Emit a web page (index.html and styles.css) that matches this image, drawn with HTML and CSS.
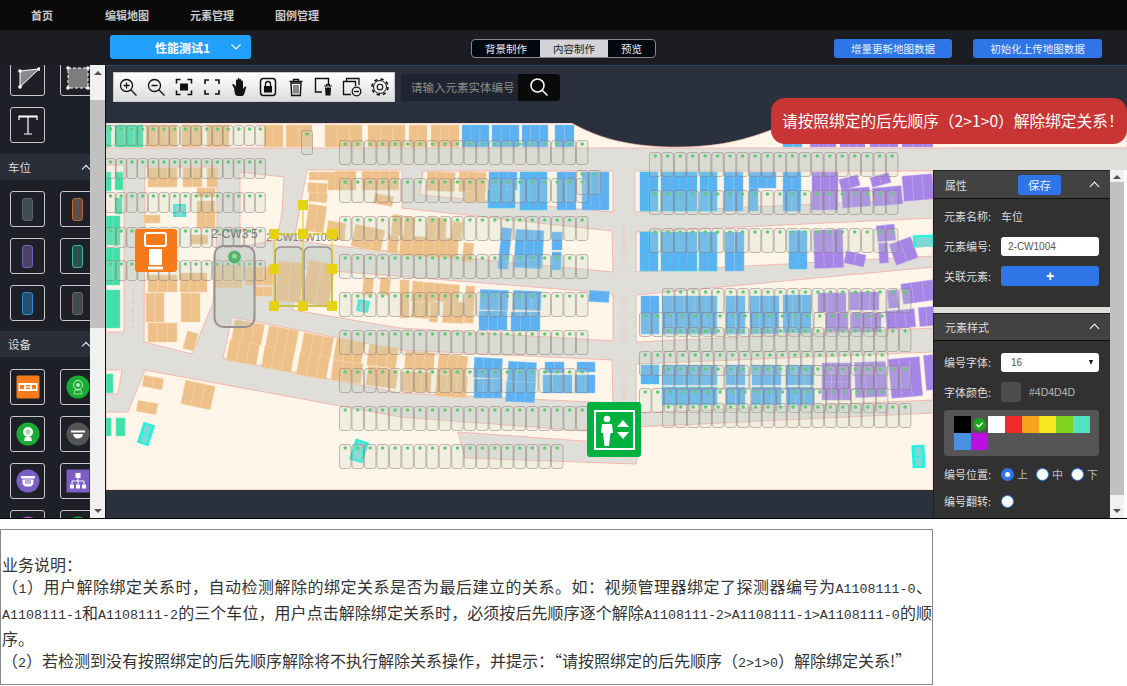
FILE: index.html
```html
<!doctype html>
<html>
    <head>
        <meta charset="utf-8">
        <title>编辑地图</title>
        <link rel="stylesheet" href="styles.css">
        <script src="map.js"></script>
    </head>
    <body>
        <div class="app">
            <nav class="topnav">
                <a class="nav-item">首页</a>
                <a class="nav-item">编辑地图</a>
                <a class="nav-item">元素管理</a>
                <a class="nav-item">图例管理</a>
            </nav>

            <div class="subbar">
                <div class="map-select">
                    <span>性能测试1</span>
                    <svg class="map-select-arrow" width="12" height="8" viewBox="0 0 12 8"><path d="M1.500 1.500 6 6l4.500-4.500" fill="none" stroke="#fff" stroke-width="1.200"/></svg>
                </div>
                <div class="tabs">
                    <span class="tab tab-1">背景制作</span>
                    <span class="tab tab-1 active">内容制作</span>
                    <span class="tab tab-2">预览</span>
                </div>
                <button class="blue-btn btn-a">增量更新地图数据</button>
                <button class="blue-btn btn-b">初始化上传地图数据</button>
            </div>

            <div class="main">
                <aside class="sidebar">
                    <div class="tile-row first">
                        <div class="tile">
                            <svg width="24" height="24" viewBox="0 0 24 24"><path d="M4 5 23 3 4 21Z" fill="#8a8a8a" stroke="#fff"/><g fill="#fff"><circle cx="4" cy="5" r="1.800"/><circle cx="23" cy="3" r="1.800"/><circle cx="4" cy="21" r="1.800"/></g></svg>
                        </div>
                        <div class="tile">
                            <svg width="28" height="28" viewBox="0 0 28 28"><rect x="4" y="4" width="20" height="20" fill="#7d7d7d" stroke="#fff" stroke-dasharray="3 2"/><g fill="#fff"><circle cx="4" cy="4" r="1.800"/><circle cx="24" cy="4" r="1.800"/><circle cx="4" cy="24" r="1.800"/><circle cx="24" cy="24" r="1.800"/></g></svg>
                        </div>
                    </div>
                    <div class="tile-row">
                        <div class="tile">
                            <svg width="24" height="24" viewBox="0 0 24 24"><path d="M3 7V3h18v4M3 3.800h18M12 3.500V21M8 21h8" fill="none" stroke="#fff" stroke-width="1.200"/></svg>
                        </div>
                    </div>

                    <div class="section-head"><span>车位</span><i class="chev"></i></div>
                    <div class="tile-row">
                        <div class="tile"><i class="slot slot-grey"></i></div>
                        <div class="tile"><i class="slot slot-orange"></i></div>
                    </div>
                    <div class="tile-row">
                        <div class="tile"><i class="slot slot-purple"></i></div>
                        <div class="tile"><i class="slot slot-teal"></i></div>
                    </div>
                    <div class="tile-row">
                        <div class="tile"><i class="slot slot-blue"></i></div>
                        <div class="tile"><i class="slot slot-red"></i></div>
                    </div>

                    <div class="section-head second"><span>设备</span><i class="chev"></i></div>
                    <div class="tile-row">
                        <div class="tile">
                            <svg width="24" height="24" viewBox="0 0 24 24"><rect width="23" height="23" x=".5" y=".5" rx="1.500" fill="#f57a1a"/><rect x="2.500" y="8" width="19" height="8" fill="#fff"/><g fill="#f57a1a"><rect x="4" y="10" width="4" height="4"/><rect x="10" y="10" width="4" height="1.500"/><rect x="10" y="12.600" width="4" height="1.500"/><rect x="16" y="10" width="4" height="4"/></g></svg>
                        </div>
                        <div class="tile">
                            <svg width="24" height="24" viewBox="0 0 24 24"><circle cx="12" cy="12" r="11.500" fill="#19ad36"/><circle cx="12" cy="10" r="4.500" fill="none" stroke="#d8f0dc" stroke-width="1"/><circle cx="12" cy="10" r="2" fill="#b5e4be"/><path d="M8 19h8l-1-4H9Z" fill="none" stroke="#d8f0dc" stroke-width=".7"/></svg>
                        </div>
                    </div>
                    <div class="tile-row">
                        <div class="tile">
                            <svg width="24" height="24" viewBox="0 0 24 24"><circle cx="12" cy="12" r="11.500" fill="#19ad36"/><circle cx="12" cy="10" r="5" fill="#fff"/><circle cx="12" cy="10" r="2.400" fill="#9fd8aa"/><path d="M8 19h8l-1-4H9Z" fill="#fff"/></svg>
                        </div>
                        <div class="tile">
                            <svg width="24" height="24" viewBox="0 0 24 24"><circle cx="12" cy="12" r="11.500" fill="#555"/><rect x="5" y="8.500" width="14" height="2" fill="#fff"/><path d="M7 12h10c-.5 3-2.500 4.500-5 4.500S7.500 15 7 12Z" fill="#fff"/></svg>
                        </div>
                    </div>
                    <div class="tile-row">
                        <div class="tile">
                            <svg width="24" height="24" viewBox="0 0 24 24"><circle cx="12" cy="12" r="11.500" fill="#7b5fc4"/><rect x="5" y="7" width="14" height="2.500" fill="#fff"/><path d="M6.500 10.500h11V15l-2.500 2.500H9L6.500 15Z" fill="#fff"/><path d="M10 11v4M12 11v4M14 11v4" stroke="#7b5fc4"/></svg>
                        </div>
                        <div class="tile">
                            <svg width="24" height="24" viewBox="0 0 24 24"><rect width="23" height="23" x=".5" y=".5" fill="#7b5fc4"/><g fill="#fff"><rect x="9.500" y="4" width="5" height="5"/><rect x="4" y="15.500" width="4" height="4"/><rect x="10" y="15.500" width="4" height="4"/><rect x="16" y="15.500" width="4" height="4"/></g><path d="M12 9v6M6 15v-3h12v3" fill="none" stroke="#fff"/></svg>
                        </div>
                    </div>
                    <div class="tile-row">
                        <div class="tile">
                            <svg width="24" height="24" viewBox="0 0 24 24"><circle cx="12" cy="12" r="11.500" fill="#b44fc0"/></svg>
                        </div>
                        <div class="tile">
                            <svg width="24" height="24" viewBox="0 0 24 24"><circle cx="12" cy="12" r="11.500" fill="#19ad36"/></svg>
                        </div>
                    </div>
                </aside>

                <div class="scrollbar side-scroll">
                    <i class="arrow-up"></i>
                    <div class="thumb"></div>
                    <i class="arrow-down"></i>
                </div>

                <section class="canvas">
                    <svg id="map" class="map" width="1021" height="367" viewBox="106 123 1021 367">
                        <g id="bands"></g>
                        <g id="cells"></g>
                        <g id="slots"></g>
                        <!-- dark bite out of the top edge of the plan -->
                        <path d="M570 122 C600 140 635 147 677 147 C720 147 750 140 790 122Z" fill="#2b303d" stroke="#f7aaa5" stroke-width=".6"/>

                        <text class="map-label" x="211" y="238">2-CW3</text>
                        <text class="map-label" x="251" y="238">5</text>
                        <text class="map-label small" x="266" y="241">2-CW10</text>
                        <text class="map-label small" x="305" y="241">W1005</text>

                        <rect x="214.500" y="246" width="40" height="81" rx="9" fill="rgba(190,205,195,.35)" stroke="#9a8f8f" stroke-width="2"/>
                        <circle cx="234.500" cy="257" r="6.500" fill="#56b36a"/>
                        <circle cx="234.500" cy="256" r="2.500" fill="#9bd6a6"/>

                        <rect x="275" y="247" width="28" height="59" rx="6" fill="rgba(190,205,195,.3)" stroke="#9a8f8f" stroke-width="1.500"/>
                        <rect x="304" y="247" width="28" height="59" rx="6" fill="rgba(190,205,195,.3)" stroke="#9a8f8f" stroke-width="1.500"/>
                        <g fill="none" stroke="#e5d313" stroke-width="1.200">
                            <rect x="274" y="234" width="58" height="72"/>
                            <path d="M303 205V306"/>
                        </g>
                        <g fill="#e5d313">
                            <rect x="298" y="200" width="10" height="10"/>
                            <rect x="269" y="229" width="10" height="10"/>
                            <rect x="298" y="229" width="10" height="10"/>
                            <rect x="327" y="229" width="10" height="10"/>
                            <rect x="269" y="264" width="10" height="10"/>
                            <rect x="327" y="264" width="10" height="10"/>
                            <rect x="269" y="301" width="10" height="10"/>
                            <rect x="298" y="301" width="10" height="10"/>
                            <rect x="327" y="301" width="10" height="10"/>
                        </g>

                        <g>
                            <rect x="135" y="229" width="42" height="43" rx="3" fill="#f57a1a"/>
                            <rect x="145" y="233" width="21" height="13" rx="2" fill="none" stroke="#fff" stroke-width="2"/>
                            <rect x="149" y="249" width="13" height="16" fill="#fff"/>
                            <rect x="148" y="266.500" width="15" height="3" fill="#fff"/>
                        </g>

                        <g>
                            <rect x="587" y="402" width="54" height="55" rx="3" fill="#00b140"/>
                            <rect x="595" y="411" width="39" height="38" fill="none" stroke="#fff" stroke-width="2"/>
                            <circle cx="607" cy="419" r="3.300" fill="#fff"/>
                            <path d="M602 424h10l1 9h-2.500l-1.500 13h-4.500l-1.500-13H601Z" fill="#fff"/>
                            <path d="M617 427l6-7 6 7ZM617 432l6 7 6-7Z" fill="#fff"/>
                        </g>
                    </svg>

                    <div class="toolbar-row">
                        <div class="toolbar">
                            <svg class="tool" viewBox="0 0 20 20"><circle cx="8.500" cy="8.500" r="6" fill="none" stroke="#111" stroke-width="1.300"/><path d="M13 13l5.500 5.500M5.500 8.500h6M8.500 5.500v6" stroke="#111" stroke-width="1.300"/></svg>
                            <svg class="tool" viewBox="0 0 20 20"><circle cx="8.500" cy="8.500" r="6" fill="none" stroke="#111" stroke-width="1.300"/><path d="M13 13l5.500 5.500M5.500 8.500h6" stroke="#111" stroke-width="1.300"/></svg>
                            <svg class="tool" viewBox="0 0 20 20"><path d="M2.500 6.500v-4h4M13.500 2.500h4v4M17.500 13.500v4h-4M6.500 17.500h-4v-4" fill="none" stroke="#111" stroke-width="1.600"/><rect x="6" y="6.500" width="8" height="7" fill="#111"/></svg>
                            <svg class="tool" viewBox="0 0 20 20"><path d="M3 7V3h4M13 3h4v4M17 13v4h-4M7 17H3v-4" fill="none" stroke="#111" stroke-width="1.600"/></svg>
                            <svg class="tool" viewBox="0 0 20 20"><path d="M4 11 2.500 8.500c-.6-1 .8-2 1.600-1L6 9.500V3.500c0-1.200 1.700-1.200 1.700 0V1.800c0-1.200 1.800-1.200 1.800 0v1.200c0-1.200 1.800-1.200 1.800 0v1.200c0-1.100 1.700-1.100 1.700 0V12l1.500-2c.8-1 2.100 0 1.500 1L14 17.500c-.6 1-1.500 1.500-2.500 1.500H8c-1.500 0-2.500-.8-3-2Z" fill="#111"/></svg>
                            <svg class="tool" viewBox="0 0 20 20"><rect x="2.500" y="1.500" width="15" height="17" rx="3" fill="none" stroke="#111" stroke-width="1.500"/><rect x="6" y="9" width="8" height="6.500" fill="#111"/><path d="M7.500 9V7a2.500 2.500 0 0 1 5 0v2" fill="none" stroke="#111" stroke-width="1.300"/></svg>
                            <svg class="tool" viewBox="0 0 20 20"><path d="M3.500 4.500h13M7.500 4.500V2.500h5v2" fill="none" stroke="#111" stroke-width="1.300"/><path d="M5 6h10l-.7 12.500H5.700Z" fill="none" stroke="#111" stroke-width="1.400"/><path d="M8 8v8.500M10 8v8.500M12 8v8.500" stroke="#111" stroke-width=".9"/></svg>
                            <svg class="tool" viewBox="0 0 20 20"><path d="M8 15H1.500V1.500h13V7" fill="none" stroke="#111" stroke-width="1.400"/><path d="M10 9h8M12.500 9V7.500h3V9" fill="none" stroke="#111" stroke-width="1.100"/><path d="M11 10.500h6l-.5 8h-5Z" fill="#111"/></svg>
                            <svg class="tool" viewBox="0 0 20 20"><path d="M4.500 4V1.500H17V8" fill="none" stroke="#111" stroke-width="1.300"/><path d="M9 17.500H1.500V4.500h12V9" fill="none" stroke="#111" stroke-width="1.300"/><circle cx="14.500" cy="14.500" r="4.300" fill="none" stroke="#111" stroke-width="1.300"/><path d="M12 14.500h5" stroke="#111" stroke-width="1.300"/></svg>
                            <svg class="tool" viewBox="0 0 20 20"><circle cx="10" cy="10" r="8" fill="none" stroke="#111" stroke-width="1.600" stroke-dasharray="3.300 3"/><circle cx="10" cy="10" r="6.500" fill="none" stroke="#111" stroke-width="1"/><circle cx="10" cy="10" r="2.800" fill="none" stroke="#111" stroke-width="1.100"/></svg>
                        </div>
                        <div class="search">
                            <div class="search-input">请输入元素实体编号</div>
                            <div class="search-btn">
                                <svg width="20" height="20" viewBox="0 0 20 20"><circle cx="8.500" cy="8.500" r="6.500" fill="none" stroke="#fff" stroke-width="1.500"/><path d="M13 13l5.500 5.500" stroke="#fff" stroke-width="1.500"/></svg>
                            </div>
                        </div>
                    </div>

                    <div class="toast">请按照绑定的后先顺序（2&gt;1&gt;0）解除绑定关系！</div>

                    <div class="side">
                        <div class="panels">
                            <div class="card card-props">
                                <div class="card-head">
                                    <span>属性</span>
                                    <button class="save-btn">保存</button>
                                    <i class="chev"></i>
                                </div>
                                <div class="card-body">
                                    <div class="row"><label>元素名称:</label><span>车位</span></div>
                                    <div class="row"><label>元素编号:</label><div class="field">2-CW1004</div></div>
                                    <div class="row"><label>关联元素:</label><button class="add-btn">+</button></div>
                                </div>
                            </div>
                            <div class="card card-style">
                                <div class="card-head">
                                    <span>元素样式</span>
                                    <i class="chev"></i>
                                </div>
                                <div class="card-body">
                                    <div class="row"><label>编号字体:</label><div class="field field-select"><span>16</span><i class="caret"></i></div></div>
                                    <div class="row"><label>字体颜色:</label><i class="color-box"></i><span class="color-text">#4D4D4D</span></div>
                                    <div class="palette">
                                        <i style="background:#000"></i>
                                        <i class="picked"><svg width="13" height="13" viewBox="0 0 13 13"><circle cx="6.500" cy="6.500" r="6.500" fill="#1aa51a"/><path d="M3.500 6.500l2.200 2.200 4-4" fill="none" stroke="#fff" stroke-width="1.600"/></svg></i>
                                        <i style="background:#fff"></i>
                                        <i style="background:#f02a2a"></i>
                                        <i style="background:#faa31f"></i>
                                        <i style="background:#f8e71c"></i>
                                        <i style="background:#7ed321"></i>
                                        <i style="background:#50e3c2"></i>
                                        <i style="background:#4a90e2"></i>
                                        <i style="background:#bd10e0"></i>
                                    </div>
                                    <div class="row row-tight"><label>编号位置:</label>
                                        <div class="radios">
                                            <span class="radio-item"><i class="radio on"></i>上</span>
                                            <span class="radio-item"><i class="radio"></i>中</span>
                                            <span class="radio-item"><i class="radio"></i>下</span>
                                        </div>
                                    </div>
                                    <div class="row"><label>编号翻转:</label><i class="radio"></i></div>
                                </div>
                            </div>
                        </div>
                        <div class="scrollbar panel-scroll">
                            <i class="arrow-up"></i>
                            <div class="thumb"></div>
                            <i class="arrow-down"></i>
                        </div>
                    </div>
                </section>
            </div>
        </div>

        <div class="note">
            <p>业务说明：</p>
            <p>（<span class="code">1</span>）用户解除绑定关系时，自动检测解除的绑定关系是否为最后建立的关系。如：视频管理器绑定了探测器编号为<span class="code">A1108111-0</span>、<span class="code">A1108111-1</span>和<span class="code">A1108111-2</span>的三个车位，用户点击解除绑定关系时，必须按后先顺序逐个解除<span class="code">A1108111-2&gt;A1108111-1&gt;A1108111-0</span>的顺序。</p>
            <p>（<span class="code">2</span>）若检测到没有按照绑定的后先顺序解除将不执行解除关系操作，并提示：“请按照绑定的后先顺序（<span class="code">2&gt;1&gt;0</span>）解除绑定关系!”</p>
        </div>
    </body>
</html>
```

FILE: styles.css
```css
* {
    box-sizing: border-box;
}
body {
    margin: 0;
    background: #fff;
    font-family: "Noto Sans CJK SC", "Liberation Sans", sans-serif;
    overflow: hidden;
}
i {
    display: block;
}
button {
    font-family: inherit;
    border: 0;
    padding: 0;
}

.app {
    height: 519px;
    background: #1b1d22;
    border-bottom: 1px solid #000;
    overflow: hidden;
}

/* top nav */
.topnav {
    height: 30px;
    background: #0a0a0a;
    display: flex;
    padding-left: 20px;
    gap: 41px;
    align-items: center;
}
.nav-item {
    color: #c9c9c9;
    font-size: 11px;
    font-weight: 700;
    min-width: 44px;
    text-align: center;
}

/* second bar */
.subbar {
    height: 35px;
    display: flex;
    align-items: center;
    padding-left: 110px;
}
.map-select {
    width: 141px;
    height: 24px;
    background: #22a0ff;
    border-radius: 3px;
    color: #fff;
    font-size: 12px;
    font-weight: 700;
    display: flex;
    align-items: center;
    padding-left: 45px;
    margin-top: -1px;
}
.map-select-arrow {
    margin-left: 20px;
}
.tabs {
    display: flex;
    margin-left: 220px;
    height: 19px;
    border: 1px solid #888;
    border-radius: 4px;
    overflow: hidden;
    background: #02080f;
    margin-top: 1px;
}
.tab {
    color: #eee;
    font-size: 10.500px;
    line-height: 17px;
    text-align: center;
}
.tab-1 {
    width: 68px;
}
.tab-2 {
    width: 47px;
}
.tab.active {
    background: #d3d4d8;
    color: #222;
}
.blue-btn {
    height: 19px;
    background: #2f75e8;
    color: #e8f0ff;
    font-size: 10.500px;
    border-radius: 3px;
    margin-top: 1px;
}
.btn-a {
    width: 118px;
    margin-left: 178px;
}
.btn-b {
    width: 129px;
    margin-left: 21px;
}

/* main */
.main {
    display: flex;
    height: 453px;
}
.sidebar {
    width: 90px;
    background: #1e2028;
    overflow: hidden;
    flex: none;
}
.tile-row {
    display: flex;
    gap: 15px;
    padding-left: 10px;
    margin-bottom: 11px;
    width: 130px;
}
.tile-row.first {
    margin-top: -5px;
}
.tile {
    width: 35px;
    height: 36px;
    flex: none;
    border: 1px solid #c8c8c8;
    border-radius: 3px;
    display: flex;
    align-items: center;
    justify-content: center;
}
.section-head {
    height: 26px;
    background: #2b2e39;
    color: #ddd;
    font-size: 11.500px;
    padding: 0 0 0 8px;
    display: flex;
    align-items: center;
    justify-content: space-between;
    margin-bottom: 11px;
}
.section-head.second {
    margin-top: -1px;
    margin-bottom: 12px;
}
.chev {
    width: 6px;
    height: 6px;
    border-left: 1.500px solid #fff;
    border-top: 1.500px solid #fff;
    transform: rotate(45deg);
    margin-top: 3px;
}
.section-head .chev {
    margin-right: 1px;
}
.slot {
    width: 11px;
    height: 23px;
    border-radius: 3px;
    border: 1px solid;
}
.slot-grey {
    background: #3f4d4f;
    border-color: #5c6668;
}
.slot-orange {
    background: #5a4f4c;
    border-color: #c0682f;
}
.slot-purple {
    background: #4b4560;
    border-color: #7a5fc0;
}
.slot-teal {
    background: #2c5050;
    border-color: #3fb5a0;
}
.slot-blue {
    background: #24506e;
    border-color: #2c8fd0;
}
.slot-red {
    background: #3f4d4f;
    border-color: #7a5a5a;
}

/* scrollbars */
.scrollbar {
    width: 15px;
    flex: none;
    background: #f1f1f1;
    display: flex;
    flex-direction: column;
    align-items: center;
}
.thumb {
    background: #c1c1c1;
    width: 100%;
}
.side-scroll {
    height: 453px;
}
.side-scroll .thumb {
    height: 228px;
    margin-top: 25px;
    margin-bottom: auto;
}
.arrow-up, .arrow-down {
    width: 0;
    height: 0;
    border-left: 4px solid transparent;
    border-right: 4px solid transparent;
    margin: 5px 0;
}
.arrow-up {
    border-bottom: 4px solid #555;
}
.arrow-down {
    border-top: 4px solid #555;
}
.side-scroll .arrow-up {
    margin-bottom: 0;
    margin-top: 6px;
}

/* canvas */
.canvas {
    position: relative;
    flex: 1;
    background: #2b303d;
    border-left: 1px solid #101218;
    border-top: 1px solid #2a4668;
    overflow: hidden;
}
.map {
    position: absolute;
    left: 0;
    top: 57px;
}
.map-label {
    font: 12px "Liberation Sans", sans-serif;
    fill: #777;
}
.map-label.small {
    font-size: 10.500px;
}
.toolbar-row {
    position: relative;
    display: flex;
    padding: 6px 0 0 7px;
    gap: 6px;
    align-items: center;
}
.toolbar {
    width: 282px;
    height: 30px;
    display: flex;
    gap: 8px;
    align-items: center;
    padding-left: 5px;
    background: linear-gradient(#fff, #dcdcdc);
    border: 1px solid #c9c9c9;
}
.tool {
    width: 20px;
    height: 20px;
    flex: none;
    margin-left: -1px;
    margin-right: 1px;
}
.search {
    display: flex;
    height: 27px;
}
.search-input {
    width: 117px;
    background: #1f2430;
    color: #8d8d8d;
    font-size: 11.500px;
    line-height: 27px;
    padding-left: 10px;
    border-radius: 3px 0 0 3px;
    overflow: hidden;
    white-space: nowrap;
}
.search-btn {
    width: 42px;
    background: #0a0a0a;
    display: flex;
    align-items: center;
    justify-content: center;
    border-radius: 0 3px 3px 0;
}

/* toast */
.toast {
    position: absolute;
    left: 665px;
    top: 32px;
    width: 356px;
    height: 46px;
    background: #c93434;
    color: #fff;
    border-radius: 14px;
    font-size: 15.700px;
    line-height: 46px;
    padding-left: 11px;
    white-space: nowrap;
}

/* right panels */
.side {
    position: absolute;
    left: 827px;
    top: 104px;
    bottom: 0;
    width: 194px;
    display: flex;
    background: linear-gradient(to right, transparent 191px, #fff 191px);
}
.panels {
    width: 177px;
    flex: none;
}
.card {
    background: #313131;
    color: #ddd;
    font-size: 11px;
    border: 1px solid #222;
    border-width: 1px 0 0 1px;
}
.card-props {
    height: 137px;
    margin-bottom: 6px;
}
.card-style {
    height: 205px;
}
.card-head {
    height: 28px;
    background: #424242;
    border-bottom: 1px solid #111;
    display: flex;
    align-items: center;
    padding: 0 11px;
    position: relative;
}
.card-style .card-head {
    height: 27px;
}
.card-head .chev {
    margin-left: auto;
    margin-right: 1px;
    width: 7px;
    height: 7px;
    border-width: 1px;
}
.save-btn {
    position: absolute;
    left: 84px;
    top: 4px;
    width: 43px;
    height: 20px;
    background: #2f75e8;
    color: #e8f0ff;
    font-size: 11.500px;
    border-radius: 3px;
}
.card-body {
    padding: 7px 10px 0;
}
.card-style .card-body {
    padding-top: 11px;
}
.row {
    display: flex;
    align-items: center;
    height: 20px;
    margin-bottom: 10px;
}
.row-tight {
    margin-bottom: 7px;
}
.row label {
    width: 57px;
    flex: none;
}
.field {
    width: 98px;
    height: 19px;
    background: #fff;
    border-radius: 3px;
    color: #555;
    font: 10px/19px "Liberation Sans", sans-serif;
    padding-left: 7px;
}
.field-select {
    display: flex;
    align-items: center;
    justify-content: space-between;
    padding: 0 6px 0 10px;
}
.caret {
    width: 0;
    height: 0;
    border-left: 2.500px solid transparent;
    border-right: 2.500px solid transparent;
    border-top: 5px solid #111;
}
.add-btn {
    width: 98px;
    height: 20px;
    background: #2f75e8;
    color: #fff;
    font: 700 14px/20px "Liberation Sans", sans-serif;
    border-radius: 3px;
}
.color-box {
    width: 20px;
    height: 20px;
    background: #4d4d4d;
    border-radius: 3px;
}
.color-text {
    margin-left: 8px;
    font: 10.500px "Liberation Sans", sans-serif;
    color: #bbb;
}
.palette {
    width: 155px;
    height: 46px;
    background: #555;
    border-radius: 3px;
    padding: 6px 9px 6px 10px;
    display: flex;
    flex-wrap: wrap;
    align-content: flex-start;
    margin: -2px 0 8px;
}
.palette i {
    width: 17px;
    height: 17px;
    display: flex;
    align-items: center;
    justify-content: center;
}
.radios {
    display: flex;
    gap: 8px;
}
.radio-item {
    display: flex;
    align-items: center;
    gap: 3px;
    color: #bbb;
}
.radio {
    width: 13px;
    height: 13px;
    border-radius: 50%;
    background: #fff;
    border: 1px solid #2f75e8;
    flex: none;
}
.radio.on {
    background: #fff;
    border: 4.500px solid #2f75e8;
}

.panel-scroll {
    height: 100%;
    margin-right: 2px;
    width: 14px;
}
.panel-scroll .thumb {
    height: 313px;
    margin-top: 3px;
    margin-bottom: auto;
}
.panel-scroll .arrow-up {
    margin-bottom: 0;
}

/* note under the screenshot */
.note {
    width: 933px;
    height: 156px;
    margin-top: 10px;
    border: 1px solid #888;
    padding: 23px 0 0 1px;
    font-size: 16px;
    line-height: 22px;
    color: #333;
}
.note p {
    margin: 0;
    text-align: justify;
}
.code {
    font-family: "Liberation Mono", monospace;
    font-size: 13.330px;
}
```

FILE: map.js
```js
window.onload = function() {
    var NS = "http://www.w3.org/2000/svg";
    var colors = {
        o: { fill: "#eec08a", line: "#f4d3ab" },
        b: { fill: "#5eb1f0", line: "#82c6f6" },
        c: { fill: "#5eb1f0", line: "#2fe0f5" },
        p: { fill: "#a685e6", line: "#bba2ee" },
        t: { fill: "#43dfa8", line: "#72e9bf" }
    };

    function add(parent, tag, attrs) {
        var el = document.createElementNS(NS, tag);
        for (var k in attrs) {
            el.setAttribute(k, attrs[k]);
        }
        parent.appendChild(el);
        return el;
    }

    // road is the base colour, the cream blocks sit on it
    var bands = document.getElementById("bands");
    add(bands, "rect", { x: 106, y: 123, width: 1021, height: 367, fill: "#e0ded9" });
    var blocks = [
        "106,123 1127,123 1127,148 106,148",
        "106,165 124,165 124,332 106,332",
        "145,167 217,167 217,230 213,303 192,354 144,342",
        "240,172 284,177 282,212 277,240 240,247",
        "307,170 402,170 402,208 612,231 613,272 336,246 294,240",
        "423,171 613,171 613,212 420,195",
        "232,317 400,350 612,360 613,403 400,393 223,358",
        "296,268 608,293 613,295 613,341 400,328 293,310",
        "106,370 122,370 118,394 106,394",
        "635,171 933,171 933,199 635,212",
        "636,232 933,218 933,256 636,272",
        "636,295 933,267 933,328 636,342",
        "636,364 933,352 933,400 636,413",
        "106,412 128,412 145,370 400,417 612,433 636,427 933,413 933,490 106,490"
    ];
    for (var i = 0; i < blocks.length; i++) {
        add(bands, "polygon", { points: blocks[i], fill: "#fff6e9", stroke: "#f7aaa5", "stroke-width": 0.8 });
    }
    add(bands, "polygon", { points: "458,432 640,445 636,464 465,458", fill: "#e0ded9", stroke: "#f7aaa5", "stroke-width": 0.8 });
    add(bands, "path", { d: "M624 225V270M624 300V340M624 365V400M133 290V330", stroke: "#f2bcb8", "stroke-dasharray": "5 4", fill: "none" });

    // kind, x, y, w, h, cell columns, rotation
    var cells = [
        ["t",106,125,5,22,1,0],["t",115,125,28,22,3,0],["o",146,125,31,22,3,0],["o",182,125,20,22,2,0],["o",207,125,22,22,2,0],
        ["o",264,125,19,22,2,0],["o",286,125,26,22,2,0],["o",325,125,37,22,3,0],["o",368,125,37,22,3,0],
        ["o",409,125,18,22,2,0],["o",431,125,28,22,3,0],["b",462,125,27,22,3,0],["b",492,125,27,22,3,0],
        ["b",522,125,26,22,3,0],["b",555,125,19,22,2,0],["b",783,135,19,12,2,0],["p",810,135,26,12,3,0],
        ["p",840,135,25,12,3,0],["p",870,135,28,12,3,0],["p",902,135,31,12,3,0],

        ["t",106,172,5,19,1,0],["t",115,172,8,18,1,0],["t",115,198,7,16,1,0],["t",106,216,14,29,2,0],
        ["t",106,248,14,37,2,0],["t",106,290,14,38,1,0],["t",106,374,7,19,1,0],["t",106,418,5,18,1,0],["t",116,418,9,18,1,0],

        ["o",148,168,29,19,3,0],["o",183,168,19,19,2,0],["o",207,168,10,19,1,0],["o",197,188,18,9,2,0],
        ["o",197,201,18,27,2,0],["o",144,215,16,8,2,0],["o",191,235,17,9,1,0],["o",148,275,29,17,3,0],
        ["o",180,273,27,19,3,0],["o",146,293,18,29,2,0],["o",181,293,19,29,2,0],["o",148,323,29,19,3,0],
        ["o",185,332,11,18,1,15],["o",245,267,28,18,3,0],["o",255,287,17,9,2,0],["o",215,265,27,23,3,0],
        ["o",277,262,25,40,2,4],["o",305,262,27,43,2,10],

        ["o",309,172,19,8,2,0],["o",328,172,17,18,2,0],["o",308,183,19,10,2,5],["o",309,193,18,9,2,5],
        ["o",307,205,18,27,2,8],["o",327,222,18,16,2,10],

        ["o",335,171,21,19,2,0],["o",362,171,37,19,4,0],["o",374,195,19,10,2,10],["o",427,172,28,19,3,2],
        ["o",459,172,27,20,3,2],["o",465,192,20,10,2,0],
        ["b",489,172,28,18,3,0],["c",488,190,27,18,3,0],["c",520,172,27,38,3,0],["b",557,172,19,38,2,0],["b",582,172,27,38,3,0],

        ["o",392,215,10,20,1,5],["o",404,217,10,20,1,5],["o",427,218,19,22,2,4],["o",452,222,10,18,1,5],
        ["o",353,227,30,22,3,12],["o",335,223,10,17,1,0],["o",400,237,58,20,5,3],["o",388,235,10,18,1,5],["o",463,243,10,19,1,5],
        ["b",500,228,10,38,1,6],["b",515,230,28,38,3,3],["b",552,232,10,18,1,0],["b",552,252,9,18,1,0],

        ["o",363,278,10,17,1,5],["o",380,278,10,17,1,5],["o",400,280,9,38,1,0],["o",412,282,22,20,2,5],
        ["o",434,284,25,18,3,5],["o",412,302,17,16,2,5],["o",430,302,8,20,1,5],["o",443,302,21,21,2,3],["o",465,286,9,37,1,3],
        ["b",480,290,28,20,3,2],["b",479,311,28,19,3,0],["b",513,291,28,19,3,2],["b",511,312,29,19,3,0],["b",589,291,20,11,1,3],
        ["b",498,262,10,7,1,0],["b",515,260,26,7,2,0],

        ["o",233,322,30,21,3,10],["o",228,342,30,21,3,10],["o",267,328,30,22,3,10],["o",263,348,30,22,3,10],
        ["o",302,335,30,22,3,10],["o",298,355,30,22,3,10],["o",335,340,28,22,3,10],["o",332,362,30,20,3,8],
        ["o",368,346,29,21,3,8],["o",367,368,30,19,3,8],

        ["o",405,352,29,18,3,4],["o",402,372,29,20,3,2],["o",438,355,29,20,3,6],["o",436,375,31,22,3,4],
        ["b",474,358,28,20,3,3],["b",474,379,28,19,3,0],["b",508,362,28,20,3,3],["b",506,382,29,20,3,3],
        ["b",545,362,19,11,2,0],["b",543,375,29,18,3,0],["b",577,362,18,10,1,0],["b",575,375,20,18,2,0],

        ["o",143,377,20,11,2,10],["o",183,383,30,24,3,12],["o",137,402,20,11,2,10],

        ["c",640,172,18,39,2,0],["c",661,172,36,39,4,0],["c",700,172,17,39,2,0],["b",724,172,19,39,2,0],
        ["b",749,172,27,16,3,0],["b",749,188,9,23,1,0],["b",783,172,18,39,2,0],["p",812,172,26,38,3,0],
        ["p",840,177,19,11,2,-15],["p",871,175,19,10,2,-15],["p",842,188,28,19,3,-4],["p",873,187,29,18,3,-5],["p",903,175,30,25,3,-5],

        ["c",640,232,18,39,2,0],["c",661,232,36,39,4,0],["c",699,232,18,39,2,0],["b",725,232,19,39,2,0],["c",789,231,18,38,2,0],
        ["p",814,230,29,38,3,-2],["p",845,253,20,12,2,12],["p",877,225,18,16,2,-6],["p",892,240,23,22,2,-20],["p",879,243,9,20,1,-3],

        ["b",641,296,18,38,2,0],["b",662,296,55,38,5,0],["b",726,296,19,38,2,0],["b",750,296,29,38,3,0],["b",783,295,28,38,3,0],
        ["p",818,293,28,19,3,0],["p",826,313,22,19,2,0],["p",850,292,29,18,3,0],["p",852,313,29,19,3,0],["p",888,290,10,18,1,-5],
        ["p",886,310,29,18,3,-5],["p",919,307,15,19,2,-5],["p",902,282,32,20,3,-8],

        ["c",641,365,18,19,2,0],["b",662,365,55,20,5,0],["c",662,387,55,18,5,0],["b",726,365,19,20,2,0],["b",726,387,19,18,2,0],
        ["b",752,365,29,20,3,0],["b",752,387,29,18,3,0],["b",786,365,28,20,3,0],["b",786,387,28,18,3,0],
        ["p",822,363,29,19,3,0],["p",822,382,29,18,3,0],["p",855,362,31,35,3,-2],["p",890,358,31,39,3,-5],["p",925,355,9,35,1,-5]
    ];
    var cellLayer = document.getElementById("cells");
    for (var c = 0; c < cells.length; c++) {
        var d = cells[c];
        var g = add(cellLayer, "g", {});
        if (d[6]) {
            g.setAttribute("transform", "rotate(" + d[6] + " " + (d[1] + d[3] / 2) + " " + (d[2] + d[4] / 2) + ")");
        }
        var cw = d[3] / d[5];
        for (var n = 0; n < d[5]; n++) {
            add(g, "rect", { x: d[1] + n * cw, y: d[2], width: cw, height: d[4], fill: colors[d[0]].fill, stroke: colors[d[0]].line, "stroke-width": 0.5 });
        }
    }

    // the small cyan spots with two boxes inside
    var spots = [[173,204,13,13,0,1],[357,300,12,12,10,1],[140,423,12,22,18,2],[352,440,14,22,18,2],[912,445,13,23,-3,2],[913,235,22,12,-3,1]];
    for (var s = 0; s < spots.length; s++) {
        var sp = spots[s];
        var sg = add(cellLayer, "g", { transform: "rotate(" + sp[4] + " " + (sp[0] + sp[2] / 2) + " " + (sp[1] + sp[3] / 2) + ")" });
        add(sg, "rect", { x: sp[0], y: sp[1], width: sp[2], height: sp[3], fill: "#22f3e0" });
        var ih = (sp[3] - 3 * sp[5] + 1) / sp[5];
        for (var q = 0; q < sp[5]; q++) {
            add(sg, "rect", { x: sp[0] + 3, y: sp[1] + 2 + q * (ih + 1), width: sp[2] - 6, height: ih, fill: "#7fd8d4" });
        }
    }

    // parking slot rows: x, y, count, pitch, width, height
    var rows = [
        [105,125,15,10.7,10,20],[105,158,15,10.7,10,20],[105,192,15,10.7,10,20],[105,227,15,10.7,10,20],[105,260,15,10.7,10,20],
        [301,130,1,12,11,24],
        [339,140,20,12.47,11.5,24],[339,178,20,12.47,11.5,24],[339,216,20,12.47,11.5,24],[339,254,20,12.47,11.5,24],
        [339,292,20,12.47,11.5,24],[339,330,20,12.47,11.5,24],[339,368,20,12.47,11.5,24],[339,406,20,12.47,11.5,24],[339,444,18,12.47,11.5,24],
        [576,170,2,12.47,11.5,24],
        [649,152,20,12.47,11.5,24],[649,190,20,12.47,11.5,24],[649,228,20,12.47,11.5,24],
        [662,288,20,12.47,11.5,24],[639,312,20,12.47,11.5,24],[662,327,20,12.47,11.5,24],[639,351,20,12.47,11.5,24],
        [662,365,20,12.47,11.5,24],[639,388,20,12.47,11.5,24],[662,403,20,12.47,11.5,24]
    ];
    var slotLayer = document.getElementById("slots");
    for (var r = 0; r < rows.length; r++) {
        var w = rows[r];
        for (var m = 0; m < w[2]; m++) {
            var sx = w[0] + m * w[3];
            add(slotLayer, "rect", { x: sx + 0.5, y: w[1] + 0.5, width: w[4], height: w[5], rx: 2.5, fill: "rgba(190,215,195,.25)", stroke: "rgba(140,120,120,.5)" });
            add(slotLayer, "circle", { cx: sx + 0.5 + w[4] / 2, cy: w[1] + 4, r: 1.8, fill: "#68c878" });
        }
    }
};
```
